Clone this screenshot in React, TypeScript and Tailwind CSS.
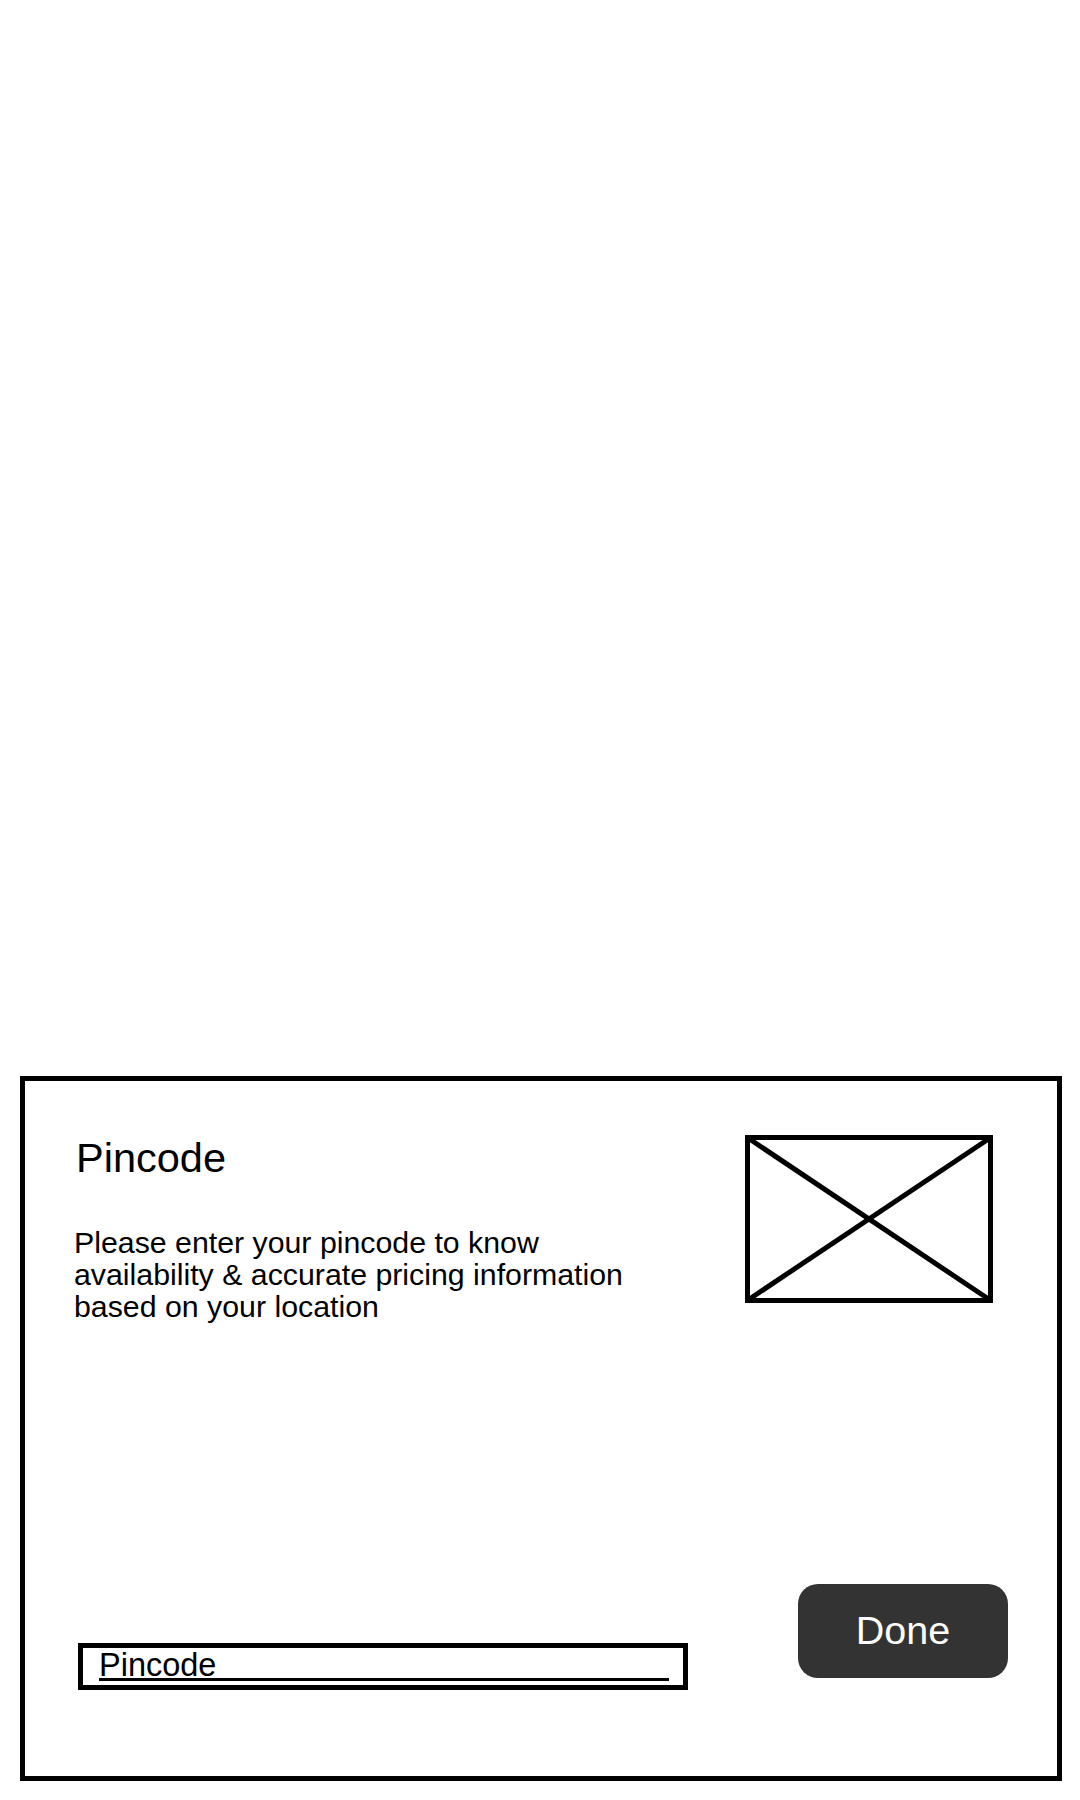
const PlaceholderImage = () => (
  <svg width="248" height="168" viewBox="0 0 248 168" className="shrink-0 -mt-[2px]">
    <rect x="2.5" y="2.5" width="243" height="163" fill="none" stroke="#000" strokeWidth="5" />
    <line x1="3" y1="3" x2="245" y2="165" stroke="#000" strokeWidth="5" />
    <line x1="245" y1="3" x2="3" y2="165" stroke="#000" strokeWidth="5" />
  </svg>
);

const App = () => {
  return (
    <div className="h-[1800px] bg-white flex flex-col justify-end pb-[19px] pl-[20px] pr-[18px] font-['Liberation_Sans',Arial,sans-serif] text-black">
      <div className="h-[705px] border-[5px] border-black flex flex-col pl-[49px] pr-[49px] pt-[56px] pb-[86px]">
        <div className="flex justify-between pr-[15px]">
          <div>
            <h1 className="text-[41.5px] leading-[41px] ml-[2px]">Pincode</h1>
            <p className="mt-[49px] w-[570px] text-[30.3px] leading-[32px]">
              Please enter your pincode to know availability &amp; accurate pricing information based on your location
            </p>
          </div>
          <PlaceholderImage />
        </div>

        <div className="flex-1" />

        <div className="flex items-start justify-between">
          <div className="ml-[4px] mt-[59px] w-[610px] h-[47px] border-[5px] border-black pt-[5px]">
            <div className="ml-[16px] w-[570px] h-[28px] border-b-[3px] border-black text-[32.5px] leading-[25px]">
              Pincode
            </div>
          </div>
          <button className="w-[210px] h-[94px] rounded-[20px] bg-[#333333] text-white text-[39.5px] leading-none flex items-center justify-center">
            Done
          </button>
        </div>
      </div>
    </div>
  );
};

export default App;
